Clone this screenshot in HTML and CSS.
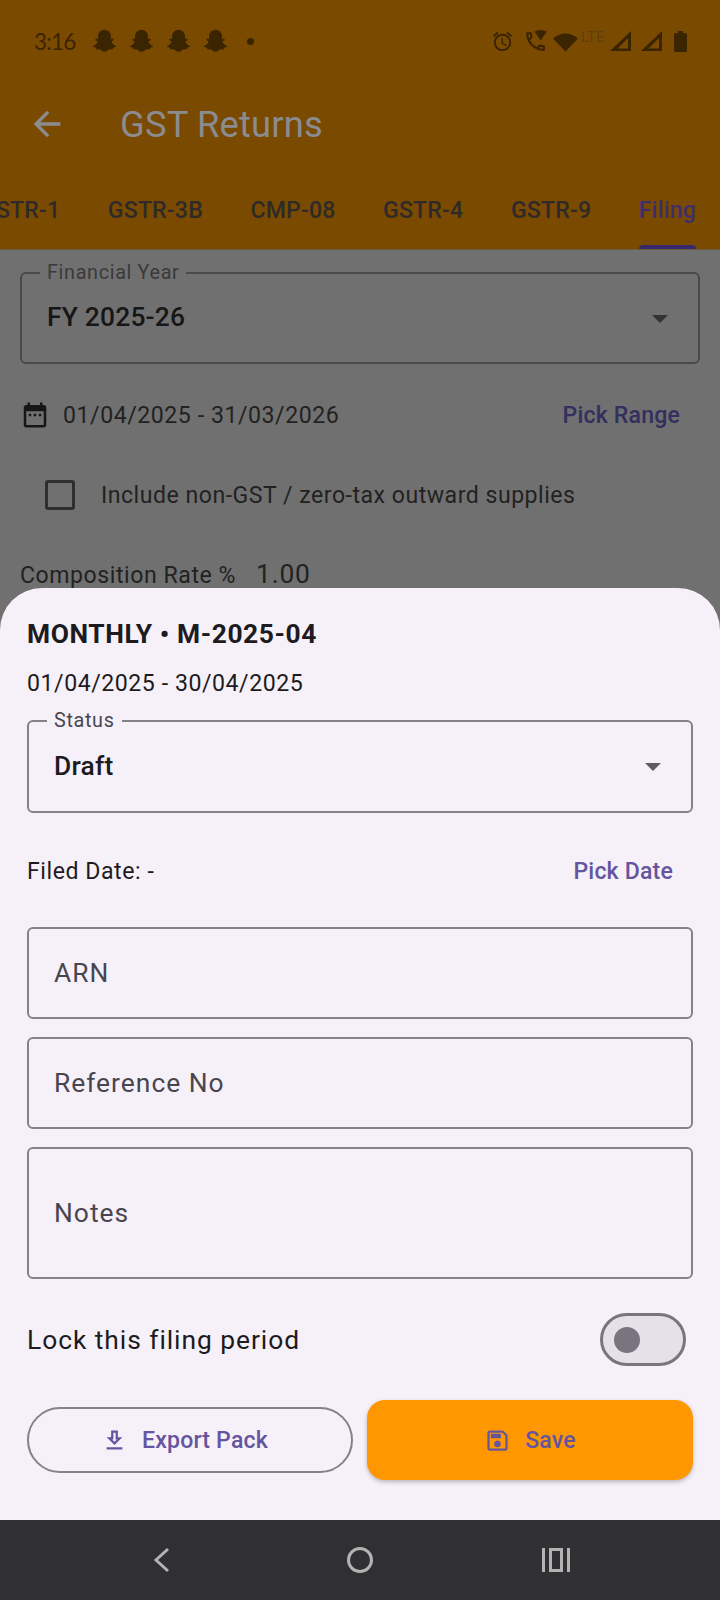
FILE: index.html
```html
<!DOCTYPE html>
<html lang="en">
<head>
  <meta charset="UTF-8" />
  <meta name="viewport" content="width=device-width, initial-scale=1.0" />
  <title>GST Returns</title>
  <link rel="stylesheet" href="styles.css">
</head>
<body>
<svg class="defs" width="0" height="0">
  <symbol id="ghost" viewBox="0 0 24 24"><path d="M12 1.500c4 0 6.500 2.700 6.500 6.200v2.600l1.800-.5.8 1.300-2.300 1.500c.6 1.700 2.200 3.200 4.200 3.800l-.2 1.200-2.400.7-.5 1.600-2.600-.2c-1.400.4-2.600 2.300-4.800 2.300s-3.400-1.900-4.800-2.300l-2.600.2-.5-1.600-2.400-.7-.2-1.200c2-.6 3.600-2.100 4.200-3.800l-2.300-1.500.8-1.300 1.800.5V7.700c0-3.500 2.500-6.200 6.500-6.200z"/></symbol>
  <symbol id="signal" viewBox="0 0 21 20"><path d="M21 0v20H0zM18 7 7.500 17.500H18z" fill-rule="evenodd"/></symbol>
</svg>
<div class="screen">
  <div class="backdrop">
    <header class="header">
      <div class="status-bar">
        <span class="time">3:16</span>
        <svg class="ghost"><use href="#ghost"/></svg>
        <svg class="ghost"><use href="#ghost"/></svg>
        <svg class="ghost"><use href="#ghost"/></svg>
        <svg class="ghost"><use href="#ghost"/></svg>
        <span class="dot"></span>
        <span class="status-right">
          <svg class="st-alarm" viewBox="0 0 24 24"><path d="M22 5.720l-4.600-3.860-1.290 1.530 4.600 3.860L22 5.720zM7.880 3.390L6.600 1.860 2 5.710l1.290 1.530 4.590-3.850zM12.500 8H11v6l4.750 2.850.75-1.230-4-2.370V8zM12 4c-4.970 0-9 4.030-9 9s4.030 9 9 9 9-4.030 9-9-4.030-9-9-9zm0 16c-3.870 0-7-3.130-7-7s3.130-7 7-7 7 3.130 7 7-3.130 7-7 7z"/></svg>
          <svg class="st-call" viewBox="0 0 24 24"><path d="M6.540 5c.06.89.21 1.760.45 2.590l-1.200 1.200c-.41-1.200-.67-2.470-.76-3.790h1.510m9.860 12.020c.85.24 1.720.39 2.600.45v1.490c-1.320-.09-2.590-.35-3.800-.75l1.200-1.190M7.500 3H4c-.55 0-1 .45-1 1 0 9.390 7.610 17 17 17 .55 0 1-.45 1-1v-3.490c0-.55-.45-1-1-1-1.240 0-2.450-.2-3.570-.57-.1-.04-.21-.05-.31-.05-.26 0-.51.1-.71.29l-2.200 2.200c-2.830-1.450-5.150-3.760-6.590-6.590l2.200-2.200c.28-.28.36-.67.25-1.020C8.700 6.450 8.500 5.250 8.500 4c0-.55-.45-1-1-1z"/><path d="M11 2.500 Q16.500-.5 23 2.500 L17 11z"/></svg>
          <svg class="st-wifi" viewBox="0 0 25 20"><path d="M12.500 19.500 0 6.500Q12.500-3.500 25 6.500z"/></svg>
          <span class="lte">LTE</span>
          <svg class="st-signal"><use href="#signal"/></svg>
          <svg class="st-signal"><use href="#signal"/></svg>
          <svg class="st-battery" viewBox="0 0 13 21"><path d="M4 0h5v2h2.500q1.500 0 1.500 1.500V19.500q0 1.500-1.500 1.500h-10Q0 21 0 19.500V3.500Q0 2 1.500 2H4z"/></svg>
        </span>
      </div>
      <div class="app-bar">
        <svg class="back" viewBox="0 0 24 24"><path d="M20 11H7.830l5.590-5.590L12 4l-8 8 8 8 1.410-1.410L7.830 13H20v-2z"/></svg>
        <h1 class="title">GST Returns</h1>
      </div>
      <div class="tabs">
        <span class="tab tab-first">GSTR-1</span>
        <span class="tab">GSTR-3B</span>
        <span class="tab">CMP-08</span>
        <span class="tab">GSTR-4</span>
        <span class="tab">GSTR-9</span>
        <span class="tab tab-active">Filing</span>
      </div>
    </header>

    <div class="behind">
      <div class="field field-dim">
        <span class="field-label label-dim">Financial Year</span>
        <span class="field-value">FY 2025-26</span>
        <span class="caret caret-dim"></span>
      </div>
      <div class="range-row">
        <svg class="calendar" viewBox="0 0 24 24"><path d="M19 4h-1V2h-2v2H8V2H6v2H5c-1.100 0-2 .9-2 2v14c0 1.100.9 2 2 2h14c1.100 0 2-.9 2-2V6c0-1.100-.9-2-2-2zm0 16H5V9h14v11zM7 11h2v2H7zm4 0h2v2h-2zm4 0h2v2h-2z"/></svg>
        <span class="range-text">01/04/2025 - 31/03/2026</span>
        <span class="link-dim">Pick Range</span>
      </div>
      <div class="check-row">
        <span class="checkbox"></span>
        <span class="check-text">Include non-GST / zero-tax outward supplies</span>
      </div>
      <div class="rate-row">
        <span class="rate-label">Composition Rate %</span>
        <span class="rate-value">1.00</span>
      </div>
    </div>
  </div>

  <section class="sheet">
    <h2 class="sheet-title">MONTHLY • M-2025-04</h2>
    <p class="sheet-dates">01/04/2025 - 30/04/2025</p>
    <div class="field field-status">
      <span class="field-label">Status</span>
      <span class="field-value">Draft</span>
      <span class="caret"></span>
    </div>
    <div class="filed-row">
      <span class="filed-text">Filed Date: -</span>
      <span class="link">Pick Date</span>
    </div>
    <div class="input input-arn">ARN</div>
    <div class="input">Reference No</div>
    <div class="input input-notes">Notes</div>
    <div class="lock-row">
      <span class="lock-text">Lock this filing period</span>
      <span class="switch"><span class="thumb"></span></span>
    </div>
    <div class="actions">
      <button class="btn btn-outline">
        <svg class="btn-icon" viewBox="0 0 24 24"><path d="M19 9h-4V3H9v6H5l7 7 7-7zm-8 2V5h2v6h1.170L12 13.170 9.830 11H11zm-6 7h14v2H5z"/></svg>
        Export Pack
      </button>
      <button class="btn btn-save">
        <svg class="btn-icon" viewBox="0 0 24 24"><path d="M17 3H5c-1.110 0-2 .9-2 2v14c0 1.100.89 2 2 2h14c1.100 0 2-.9 2-2V7l-4-4zm2 16H5V5h11.170L19 7.830V19zm-7-7c-1.660 0-3 1.340-3 3s1.340 3 3 3 3-1.340 3-3-1.340-3-3-3zM6 6h9v4H6z"/></svg>
        Save
      </button>
    </div>
  </section>

  <nav class="nav-bar">
    <svg class="nav-back" viewBox="0 0 18 26"><path d="M16 2 4 13l12 11" fill="none" stroke-width="3"/></svg>
    <svg class="nav-home" viewBox="0 0 26 26"><circle cx="13" cy="13" r="11.500" fill="none" stroke-width="3"/></svg>
    <svg class="nav-recent" viewBox="0 0 28 26"><path d="M1.500 1v24M26.500 1v24M8.500 2.500h11v21h-11z" fill="none" stroke-width="3"/></svg>
  </nav>
</div>
</body>
</html>
```

FILE: styles.css
```css
* {
  box-sizing: border-box;
}
body {
  margin: 0;
  font-family: Roboto, "Noto Sans", sans-serif;
  background: #707070;
}
.defs {
  position: absolute;
}
.screen {
  position: relative;
  width: 720px;
  height: 1600px;
  display: flex;
  flex-direction: column;
  overflow: hidden;
}
.backdrop {
  height: 1520px;
  background: #707070;
}

/* orange header, dimmed by the sheet scrim */
.header {
  height: 250px;
  background: #7a4a00;
  border-bottom: 1px solid #6b5a40;
  overflow: hidden;
}
.status-bar {
  height: 82px;
  display: flex;
  align-items: center;
  padding-left: 34px;
  color: #3b2400;
  fill: #3b2400;
}
.time {
  font-family: Lato, sans-serif;
  font-size: 22.500px;
  letter-spacing: -.8px;
  width: 57px;
}
.ghost {
  width: 26px;
  height: 26px;
  margin-right: 11px;
}
.dot {
  width: 7px;
  height: 7px;
  border-radius: 50%;
  background: #3b2400;
  margin-left: 8px;
}
.status-right {
  margin-left: auto;
  display: flex;
  align-items: center;
  padding-right: 33px;
}
.st-alarm {
  width: 23px;
  height: 23px;
  margin-right: 9px;
}
.st-call {
  width: 25px;
  height: 25px;
  margin-right: 5px;
}
.st-wifi {
  width: 25px;
  height: 20px;
  margin-top: 2px;
}
.lte {
  font-size: 14px;
  color: #5f3f0c;
  letter-spacing: .5px;
  margin: -9px 3px 0 3px;
  width: 26px;
}
.st-signal {
  width: 21px;
  height: 20px;
  margin-right: 10px;
}
.st-battery {
  width: 13px;
  height: 21px;
  margin-left: 2px;
}
.app-bar {
  height: 84px;
  display: flex;
  align-items: center;
  padding-left: 27px;
}
.back {
  width: 40px;
  height: 40px;
  fill: #8a8c90;
}
.title {
  margin: 0 0 0 53px;
  font-size: 36.300px;
  font-weight: 400;
  letter-spacing: .2px;
  color: #8a8c90;
}
.tabs {
  height: 83px;
  display: flex;
}
.tab {
  position: relative;
  font-size: 23.100px;
  font-weight: 500;
  letter-spacing: .17px;
  color: #2f2a28;
  padding-top: 31px;
  margin-left: 47.500px;
}
.tab-first {
  margin-left: -20px;
}
.tab-active {
  color: #3d2f6c;
}
.tab-active::after {
  content: "";
  position: absolute;
  left: 0;
  right: 0;
  bottom: 0;
  height: 4px;
  background: #35296b;
  border-radius: 4px 4px 0 0;
}

/* form underneath the sheet */
.behind {
  padding: 22px 20px 0;
}
.field {
  position: relative;
  height: 92px;
  border: 2px solid #85808a;
  border-radius: 6px;
  display: flex;
  align-items: center;
  padding-left: 25px;
}
.field-dim {
  border-color: #4a4a4a;
}
.field-label {
  position: absolute;
  left: 18px;
  top: -12px;
  padding: 0 7px;
  font-size: 19.800px;
  letter-spacing: .66px;
  line-height: 22px;
  color: #49454f;
  background: #f6f1f9;
}
.label-dim {
  color: #3a3a3a;
  background: #707070;
}
.field-value {
  font-size: 26.400px;
  font-weight: 500;
  letter-spacing: .2px;
  padding-bottom: 2px;
  color: #1d1b20;
}
.field-dim .field-value {
  color: #161616;
}
.caret {
  position: absolute;
  right: 30px;
  top: 41px;
  border-left: 8.500px solid transparent;
  border-right: 8.500px solid transparent;
  border-top: 8.500px solid #5f5b63;
}
.caret-dim {
  border-top-color: #333;
}
.range-row {
  display: flex;
  align-items: center;
  height: 40px;
  margin-top: 31px;
  padding-right: 20px;
}
.calendar {
  width: 30px;
  height: 30px;
  fill: #161616;
}
.range-text {
  margin-left: 13px;
  font-size: 23.100px;
  letter-spacing: .55px;
  color: #222;
}
.link-dim {
  margin-left: auto;
  font-size: 23.100px;
  font-weight: 500;
  letter-spacing: .17px;
  color: #332f5e;
}
.check-row {
  display: flex;
  align-items: center;
  height: 40px;
  margin-top: 40px;
  padding-left: 25px;
}
.checkbox {
  width: 30px;
  height: 30px;
  border: 3px solid #2f2f2f;
  border-radius: 3px;
}
.check-text {
  margin-left: 26px;
  font-size: 23.100px;
  letter-spacing: .5px;
  color: #222;
}
.rate-row {
  display: flex;
  align-items: baseline;
  margin-top: 44px;
  color: #222;
}
.rate-label {
  font-size: 23.100px;
  letter-spacing: .55px;
}
.rate-value {
  margin-left: 20px;
  font-size: 26.400px;
  letter-spacing: .8px;
}

/* bottom sheet */
.sheet {
  position: absolute;
  left: 0;
  right: 0;
  top: 588px;
  height: 932px;
  background: #f6f1f9;
  border-radius: 42px 42px 0 0;
  padding: 31px 27px 0;
}
.sheet-title {
  margin: 0;
  font-size: 26.400px;
  font-weight: 700;
  line-height: 30px;
  letter-spacing: .57px;
  color: #1d1b20;
}
.sheet-dates {
  margin: 22px 0 0;
  font-size: 23.100px;
  line-height: 26px;
  letter-spacing: .55px;
  color: #1d1b20;
}
.field-status {
  margin-top: 23px;
  height: 93px;
}
.filed-row {
  display: flex;
  justify-content: space-between;
  align-items: center;
  height: 30px;
  margin-top: 43px;
  padding-right: 20px;
}
.filed-text {
  font-size: 23.100px;
  letter-spacing: .55px;
  color: #1d1b20;
}
.link {
  font-size: 23.100px;
  font-weight: 500;
  letter-spacing: .17px;
  color: #65559f;
}
.input {
  height: 92px;
  margin-top: 18px;
  border: 2px solid #85808a;
  border-radius: 6px;
  display: flex;
  align-items: center;
  padding-left: 25px;
  font-size: 26.400px;
  letter-spacing: 1px;
  color: #49454f;
}
.input-arn {
  margin-top: 41px;
}
.input-notes {
  height: 132px;
}
.lock-row {
  display: flex;
  justify-content: space-between;
  align-items: center;
  margin-top: 34px;
  height: 53px;
  padding-right: 7px;
}
.lock-text {
  font-size: 26.400px;
  letter-spacing: .95px;
  color: #1d1b20;
}
.switch {
  width: 86px;
  height: 53px;
  border: 3px solid #79747e;
  border-radius: 27px;
  background: #e6e0e9;
  display: flex;
  align-items: center;
  padding-left: 11px;
}
.thumb {
  width: 26px;
  height: 26px;
  border-radius: 50%;
  background: #79747e;
}
.actions {
  display: grid;
  grid-template-columns: 1fr 1fr;
  align-items: center;
  gap: 14px;
  margin-top: 34px;
}
.btn {
  display: flex;
  align-items: center;
  justify-content: center;
  font-family: inherit;
  font-size: 23.100px;
  font-weight: 500;
  letter-spacing: .17px;
  color: #65559f;
  background: none;
  border: none;
  padding: 0;
}
.btn-outline {
  height: 66px;
  border: 2px solid #85808a;
  border-radius: 33px;
  padding-right: 11px;
}
.btn-save {
  height: 80px;
  background: #ff9800;
  border-radius: 18px;
  box-shadow: 0 2px 4px rgba(0, 0, 0, 0.25);
}
.btn-icon {
  width: 27px;
  height: 27px;
  fill: #65559f;
  margin-right: 14px;
}

.nav-bar {
  height: 80px;
  background: #303033;
  display: flex;
  align-items: center;
  padding-left: 152px;
  stroke: #b3b3b3;
}
.nav-back {
  width: 18px;
  height: 26px;
}
.nav-home {
  width: 26px;
  height: 26px;
  margin-left: 177px;
}
.nav-recent {
  width: 28px;
  height: 26px;
  margin-left: 169px;
}
```
